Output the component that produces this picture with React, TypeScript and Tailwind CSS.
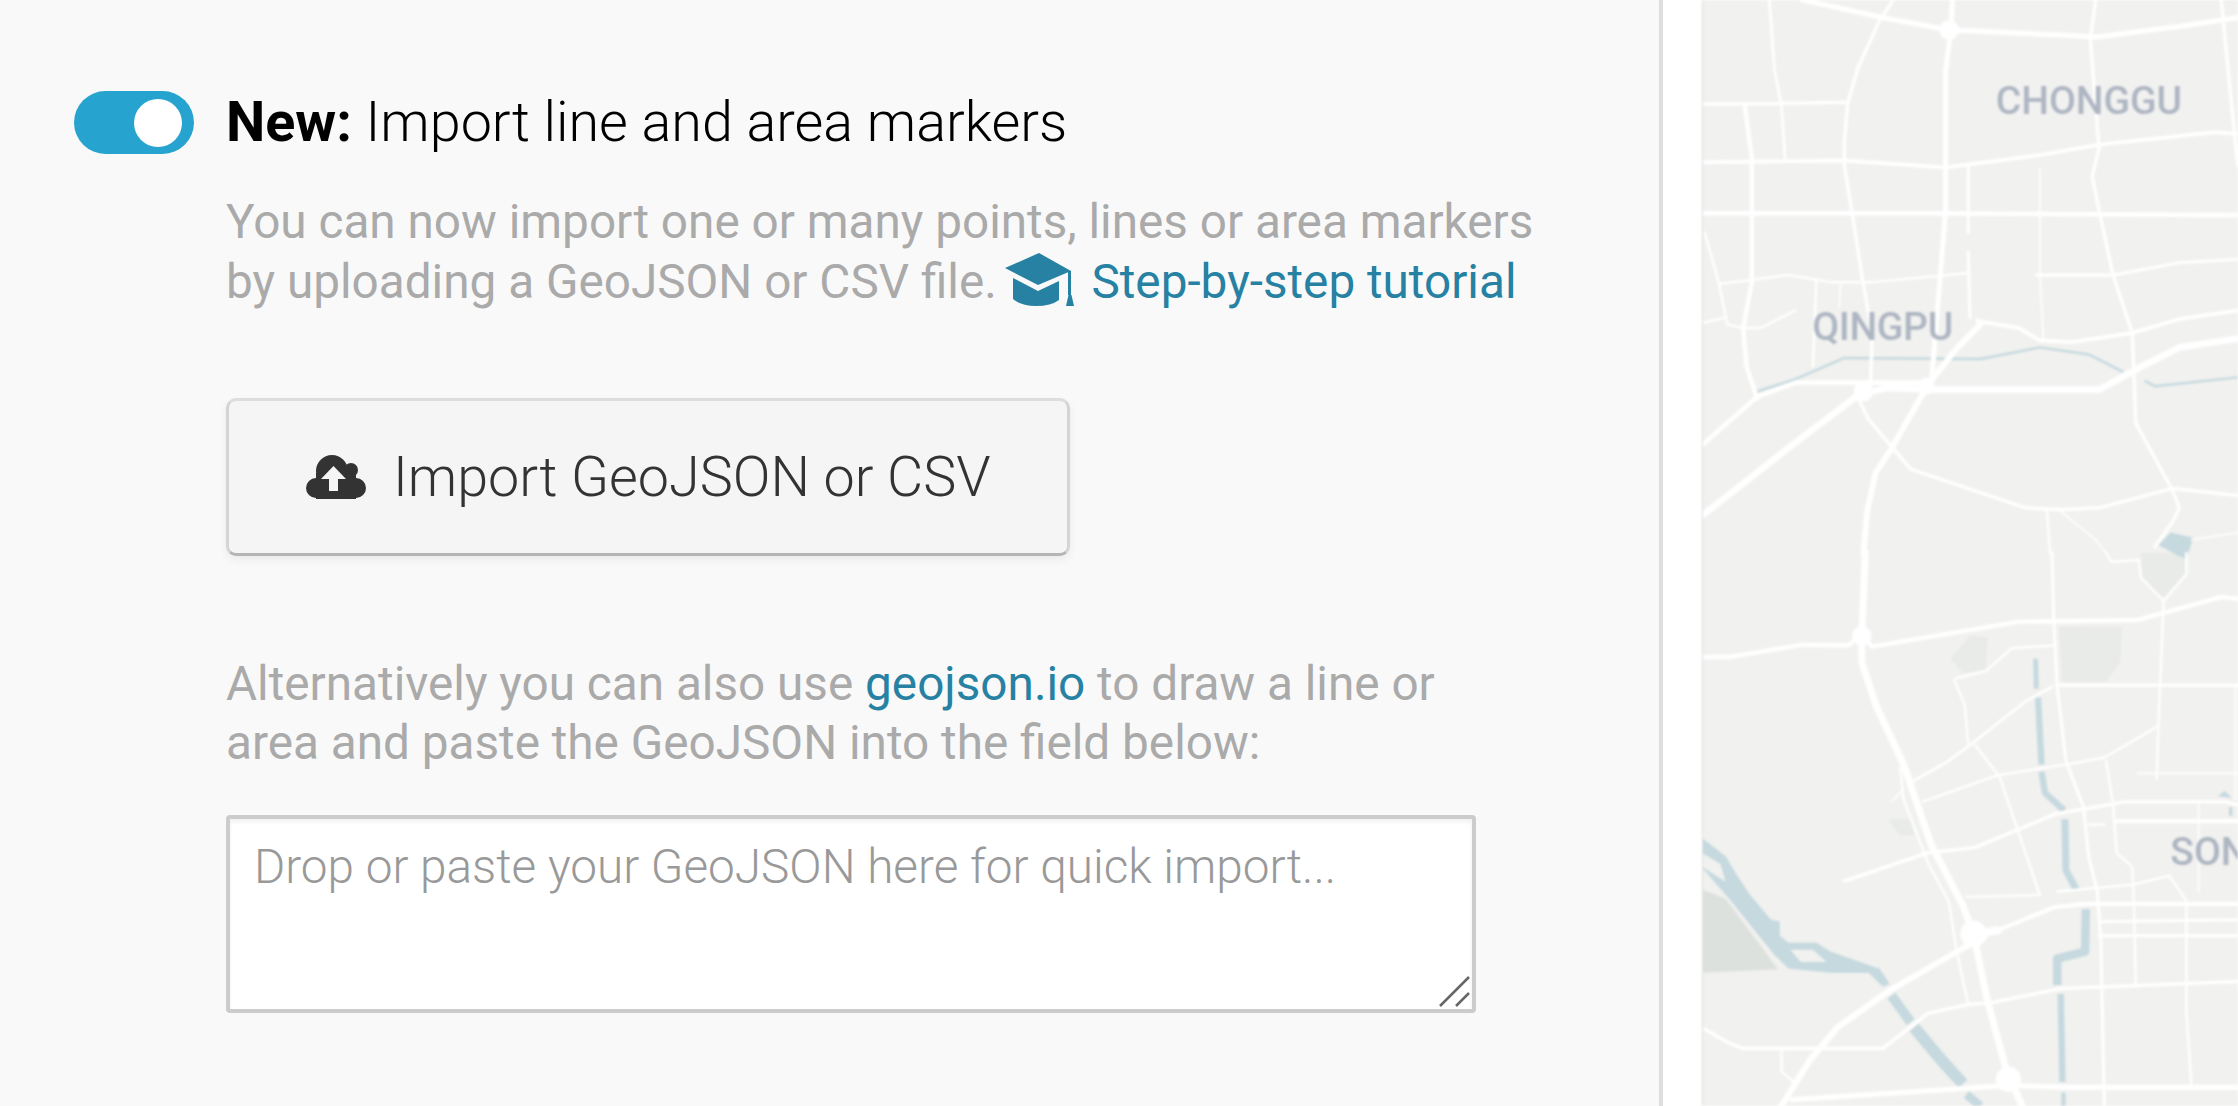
import React from "react";

// road and water lines, traced from the map in a 1533x3136 drawing space
const roads: [string, number][] = [
  ["320,0 550,50 740,85 1080,100 1160,105 1400,75 1568,50", 15],
  ["580,0 540,60 480,190 450,290 440,400 440,470 465,620 490,780 520,950 515,1090", 10],
  ["750,0 745,90 730,200 730,480 730,600 715,780 690,1080", 15],
  ["1160,0 1145,110 1160,300 1170,420 1150,500 1175,620 1210,780 1265,945 1270,1060 1275,1200 1380,1390 1400,1440 1380,1480 1330,1550", 10],
  ["1520,0 1530,100 1560,400 1568,470", 10],
  ["225,0 240,200 260,300 270,450", 8],
  ["35,295 160,295 450,290", 10],
  ["155,300 175,450 175,800 150,930 160,1040 190,1130", 13],
  ["35,460 440,455 730,475 1000,440 1170,410 1500,375 1568,380", 11],
  ["35,605 730,605 1568,610", 13],
  ["795,470 795,660", 9],
  ["795,715 800,900", 9],
  ["1000,480 1000,770 1010,960", 5],
  ["990,780 1210,780 1400,745 1568,735", 9],
  ["40,660 80,800 105,920 150,930 200,930 300,880", 7],
  ["80,805 280,780 400,800 520,800 790,775", 7],
  ["35,915 100,900", 7],
  ["360,790 350,1040", 7],
  ["430,805 425,870", 5],
  ["820,910 940,930 1000,965 1090,970 1260,945 1400,905 1568,880", 11],
  ["35,1260 190,1125 300,1085 680,1085", 13],
  ["35,1460 280,1270 480,1120 560,1100 700,1105 1170,1105 1290,1040 1400,985 1568,960", 19],
  ["830,920 760,990 680,1090 570,1280 530,1340 505,1450 495,1568", 17],
  ["480,1130 510,1190 630,1330 960,1440 1060,1445 1170,1440 1380,1385 1568,1405", 10],
  ["1020,1445 1030,1568", 7],
  ["1060,1450 1160,1530 1190,1568", 5],
  ["1435,1530 1568,1510", 5],
  ["35,1863 110,1863 320,1828 450,1830 490,1803 520,1833 940,1763 1280,1758 1520,1693 1568,1698", 13],
  ["500,1568 490,1803 490,1878 530,1998 610,2168 690,2398 780,2568 810,2648 850,2838 905,3038 950,3136", 20],
  ["1035,1568 1040,1758 1050,1948 1075,2158 1125,2288 1140,2428 1165,2528 1175,2668 1185,3136", 9],
  ["1420,1568 1420,1628 1355,1703 1290,1638 1285,1588 1205,1593 1190,1568", 7],
  ["1355,1703 1350,1818 1340,2058 1335,2208", 7],
  ["760,1923 845,1903 920,1838 1040,1830", 7],
  ["755,1928 785,1998 795,2108", 7],
  ["1050,1943 1568,1943", 10],
  ["1035,1948 960,1988 800,2113 730,2163 640,2213", 8],
  ["1340,2058 1185,2148 1075,2168 880,2198 665,2273", 7],
  ["815,2113 885,2203 1000,2538 790,2543", 7],
  ["440,2498 680,2418 815,2403 1045,2308 1210,2280 1240,2273 1530,2273 1568,2283", 10],
  ["1215,2328 1568,2328", 12],
  ["1140,2338 1185,2338", 7],
  ["1190,2158 1210,2280 1220,2418 1265,2458 1270,2568 1275,2798", 7],
  ["1050,2528 1270,2508 1370,2483 1420,2553 1420,2868 1435,3088", 7],
  ["880,2638 1040,2573 1130,2563 1568,2563", 12],
  ["810,2648 880,2638", 24],
  ["570,2808 790,2683 840,2658", 17],
  ["570,2808 420,2913 340,3008 290,3088 260,3136", 18],
  ["1170,2613 1568,2608", 9],
  ["1170,2653 1568,2653", 9],
  ["860,2843 1060,2803 1568,2783", 10],
  ["40,2918 110,2958 150,2973 550,2973 680,2873 795,2848 855,2843", 10],
  ["290,3118 600,3098 900,3078 1100,3083 1568,3083", 15],
  ["260,2973 260,3038 295,3068", 7],
  ["1280,2193 1568,2193", 5],
  ["1560,1948 1560,2268", 5],
  ["1455,2278 1455,2528", 5],
  ["600,2178 610,2268 680,2448 740,2558 760,2688 795,2848", 7],
  ["575,2273 610,2238", 5],
];

const rivers: [string, number][] = [
  ["190,1110 300,1075 440,1015 830,1018 1000,985 1140,1005 1240,1055", 7],
  ["1300,1080 1330,1095 1568,1070", 7],
  ["530,2748 560,2793", 20],
  ["575,2823 630,2898", 28],
  ["640,2913 720,3008 780,3073", 34],
  ["790,3103 830,3136", 24],
  ["988,1868 990,1953", 14],
  ["995,1978 1005,2168", 18],
  ["1005,2188 1015,2248 1070,2298", 18],
  ["1072,2323 1075,2468 1105,2523", 20],
  ["1132,2578 1130,2698 1050,2718 1050,2793", 24],
  ["1060,2818 1065,3068", 18],
  ["1068,3098 1068,3136", 12],
];

const parks: [string, string][] = [
  ["800,1803 850,1808 845,1898 780,1908 745,1868", "#e9ebe8"],
  ["1055,1778 1235,1778 1230,1878 1190,1933 1065,1933", "#e9ebe8"],
  ["565,2323 630,2323 640,2368 600,2368", "#e9ebe8"],
  ["35,2523 100,2548 250,2748 35,2758", "#dde1de"],
  ["1290,1568 1420,1568 1420,1628 1355,1698 1290,1638", "#e9ebe8"],
];

const ponds = [
  "1340,1545 1375,1510 1440,1525 1420,1585 1395,1575",
  "1510,2258 1530,2243 1550,2263",
  "1542,2288 1552,2288 1552,2313 1542,2313",
  // the wide river at the bottom left, split round its small island
  "35,2378 100,2428 130,2478 170,2538 230,2608 255,2613 255,2653 280,2673 360,2673 400,2698 530,2743 570,2793 545,2793 510,2758 400,2758 280,2746 240,2708 110,2548 35,2463",
];

function MapPanel() {
  return (
    <svg
      viewBox="35 0 1533 3136"
      preserveAspectRatio="none"
      className="h-full w-[536px] shrink-0 border-l border-[#dcdcdc] bg-[#f1f1ef] blur-[0.9px]"
    >
      {parks.map(([points, fill]) => (
        <polygon key={points} points={points} fill={fill} />
      ))}
      {rivers.map(([points, width]) => (
        <polyline key={points} points={points} fill="none" stroke="#c5d9df" strokeWidth={width} strokeLinejoin="round" />
      ))}
      {ponds.map((points) => (
        <polygon key={points} points={points} fill="#c5d9df" />
      ))}
      <polygon points="35,2420 85,2450 100,2500 35,2460" fill="#f1f1ef" />
      <polygon points="285,2693 350,2693 390,2728 315,2728" fill="#f1f1ef" />
      {roads.map(([points, width]) => (
        <polyline key={points} points={points} fill="none" stroke="#ffffff" strokeWidth={width} strokeLinejoin="round" strokeLinecap="round" />
      ))}
      <circle cx="740" cy="85" r="28" fill="#fff" />
      <circle cx="495" cy="1110" r="28" fill="#fff" />
      <circle cx="675" cy="1095" r="24" fill="#fff" />
      <circle cx="490" cy="1803" r="28" fill="#fff" />
      <circle cx="810" cy="2648" r="38" fill="#fff" />
      <circle cx="910" cy="3060" r="36" fill="#fff" />
      <g fill="#aeb6c3" fontFamily="Roboto, sans-serif" fontSize="112" fontWeight="500">
        <text x="874" y="322" textLength="534">CHONGGU</text>
        <text x="348" y="963" textLength="404">QINGPU</text>
        <text x="1374" y="2453">SON</text>
      </g>
    </svg>
  );
}

function GradCap() {
  return (
    <svg viewBox="0 0 69 53" className="ml-[-4px] mr-[6px] inline-block h-[53px] w-[69px] align-[-8px]" fill="#2681a3">
      <path d="M0 15 34 0 66 18 33 32Z" />
      <path d="M8 25 33 38 54 28V47Q46 53 31 53 16 53 8 46Z" />
      <path d="M63 18h3v24h-3ZM61 53l2.500-11h3L69 53Z" />
    </svg>
  );
}

function CloudUpload() {
  return (
    <svg viewBox="0 0 60 44" className="h-[44px] w-[60px]" fill="#333">
      <circle cx="26" cy="16" r="16" />
      <circle cx="45" cy="15" r="7" />
      <circle cx="10" cy="33" r="10" />
      <circle cx="50" cy="33" r="10" />
      <rect x="10" y="18" width="40" height="26" />
      <path d="M27.500 11 40 24h-8v12h-9V24h-8Z" fill="#f5f5f5" />
    </svg>
  );
}

export default function App() {
  return (
    <div className="flex h-[1106px] overflow-hidden bg-white font-['Roboto',sans-serif]">
      <div className="h-full w-[1663px] shrink-0 border-r-4 border-[#dedede] bg-[#f9f9f9] pl-[74px] pt-[91px]">
        {/* Encabezado */}
        <div className="flex h-[63px] items-center">
          <div className="flex h-[63px] w-[120px] items-center justify-end rounded-full bg-[#26a3ce] pr-[12px]">
            <div className="h-[48px] w-[48px] rounded-full bg-white" />
          </div>
          <h2 className="ml-[32px] whitespace-nowrap text-[55.7px] font-light leading-[63px] text-black">
            <strong className="font-bold">New:</strong> Import line and area markers
          </h2>
        </div>

        <div className="ml-[152px]">
          <p className="mt-[38px] whitespace-nowrap text-[47.7px] font-normal leading-[60px] text-[#aaaaaa]">
            You can now import one or many points, lines or area markers
            <br />
            by uploading a GeoJSON or CSV file. <GradCap />{" "}
            <a className="text-[#2681a3]">Step-by-step tutorial</a>
          </p>

          <button className="mt-[86px] flex h-[158px] w-[844px] items-center rounded-[10px] border-[3px] border-[#dddddd] border-r-[#d4d4d4] border-b-[#b5b5b5] border-l-[#d4d4d4] bg-[#f5f5f5] pl-[77px] text-[55.7px] font-light text-[#333333] shadow-[0_4px_10px_rgba(0,0,0,0.06)]">
            <CloudUpload />
            <span className="ml-[27px] whitespace-nowrap pt-[2px]">Import GeoJSON or CSV</span>
          </button>

          <p className="mt-[99px] whitespace-nowrap text-[47.7px] font-normal leading-[59px] text-[#aaaaaa]">
            Alternatively you can also use <a className="text-[#2681a3]">geojson.io</a> to draw a line or
            <br />
            area and paste the GeoJSON into the field below:
          </p>

          <div className="relative mt-[42px] h-[198px] w-[1250px]">
            <textarea
              placeholder="Drop or paste your GeoJSON here for quick import..."
              className="h-full w-full resize-none rounded-[4px] border-4 border-[#cccccc] bg-white px-[24px] py-[18px] text-[47.7px] font-light leading-[60px] text-[#333333] shadow-[inset_0_3px_4px_rgba(0,0,0,0.06)] outline-none placeholder:text-[#999999]"
            />
            <svg viewBox="0 0 31 31" className="absolute bottom-[6px] right-[6px] h-[31px] w-[31px]" stroke="#666" strokeWidth="2.500" fill="none">
              <path d="M1 30 30 1M17 30 30 17" />
            </svg>
          </div>
        </div>
      </div>
      <div className="w-[39px] shrink-0 bg-white" />
      <MapPanel />
    </div>
  );
}
